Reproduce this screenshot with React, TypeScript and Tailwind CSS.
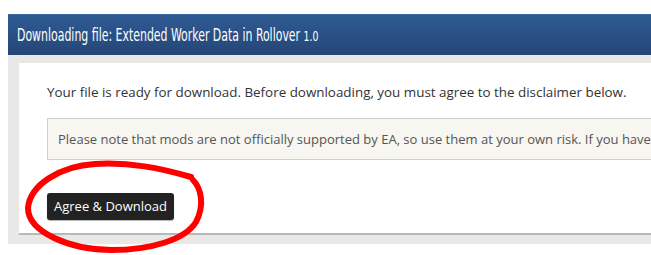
export default function App() {
  return (
    <div className="relative h-[255px] w-[651px] overflow-hidden bg-white font-['Open_Sans',sans-serif]">
      <div className="ml-2 mt-[14px] w-[720px]">
        <div className="flex h-[41px] items-center border-t border-[#3d6aa3] bg-gradient-to-b from-[#2f5b94] to-[#244676] pl-[9px] pt-[2px]">
          <h1 className="origin-left scale-x-[0.715] whitespace-nowrap font-['DejaVu_Sans_Condensed','Liberation_Sans_Narrow',Roboto,sans-serif] text-[17px] text-white">
            Downloading file: Extended Worker Data in Rollover <span className="text-[14.5px]">1.0</span>
          </h1>
        </div>
        <div className="bg-[#e9e8e6] pb-[9px] pl-[11px] pt-2">
          <div className="border-b-2 border-[#b9b9b9] bg-white pb-[13px] pl-7 pt-[20px]">
            <p className="text-[13.4px] leading-[18px] text-[#333]">
              Your file is ready for download. Before downloading, you must agree to the disclaimer below.
            </p>
            <div className="mt-[17px] border border-[#d0d0d0] bg-[#f7f6f1] py-[11px] pl-[10px]">
              <p className="whitespace-nowrap text-[13px] leading-[18px] text-[#555]">
                Please note that mods are not officially supported by EA, so use them at your own risk. If you have questions, please ask the creator.
              </p>
            </div>
            <button
              type="button"
              className="mt-[33px] h-[27px] w-[127px] rounded-[3px] bg-[#222] text-[13px] text-white shadow-[0_1px_1px_rgba(0,0,0,0.3)]"
            >
              Agree &amp; Download
            </button>
          </div>
        </div>
      </div>
      <svg className="pointer-events-none absolute left-0 top-0" width="651" height="255" viewBox="0 0 651 255">
        <path
          d="M191 177 C 160 168, 130 162, 95 164 C 60 166, 30 185, 28 208 C 28 232, 70 250, 112 250 C 150 250, 185 240, 196 222 C 205 205, 201 188, 193 180"
          fill="none"
          stroke="#f00"
          strokeWidth="6"
          strokeLinecap="round"
        />
      </svg>
    </div>
  );
}
